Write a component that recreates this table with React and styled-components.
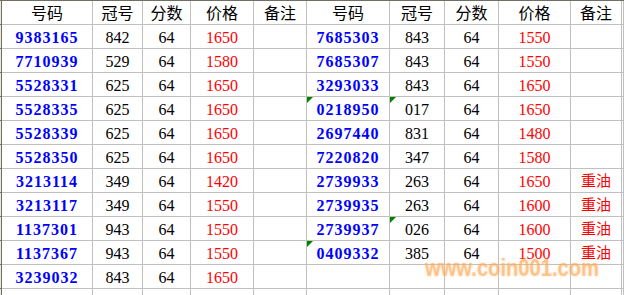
import styled, { createGlobalStyle } from "styled-components";

const COLS = [91, 50, 48, 63, 53, 83, 55, 54, 72, 51];

const GlobalStyle = createGlobalStyle`
  html, body {
    margin: 0;
    padding: 0;
    background: #ffffff;
    overflow: hidden;
  }
`;

const Page = styled.div`
  position: relative;
  width: 624px;
  height: 295px;
  overflow: hidden;
  background: #fff;
  display: flex;
  flex-direction: column;
`;

// strip left over from the column letters bar
const TopStrip = styled.div`
  display: flex;
  height: 2px;
  background: #ece9d8;
  border-bottom: 1px solid #716f64;
`;

const TopTick = styled.div`
  flex: 0 0 ${(p) => p.$w}px;
  box-sizing: border-box;
  border-right: ${(p) => (p.$tick ? "2px solid #716f64" : "none")};
`;

const Body = styled.div`
  display: flex;
  flex: 1;
`;

const LeftStrip = styled.div`
  width: 1px;
  background: #ece9d8;
  border-right: 1px solid #716f64;
  display: flex;
  flex-direction: column;
`;

const LeftTick = styled.div`
  flex: 0 0 24px;
  box-sizing: border-box;
  border-bottom: 1px solid #716f64;
`;

const Grid = styled.div`
  flex: 1;
  display: grid;
  grid-template-columns: ${COLS.map((w) => w + "px").join(" ")} 1fr;
  grid-auto-rows: 24px;
`;

const tones = { blue: "#0000ff", red: "#ff0000", black: "#000000" };

const Cell = styled.div`
  position: relative;
  box-sizing: border-box;
  border-right: 1px solid #c0c0c0;
  border-bottom: 1px solid #c0c0c0;
  text-align: center;
  white-space: nowrap;
  color: ${(p) => tones[p.$tone || "black"]};
  font-family: ${(p) =>
    p.$cjk
      ? '"Noto Sans CJK SC", sans-serif'
      : '"Liberation Serif", serif'};
  font-size: ${(p) => (p.$cjk ? p.$cjk + "px" : "16px")};
  font-weight: ${(p) => (p.$bold ? 700 : 400)};
  letter-spacing: ${(p) => (p.$bold ? "1px" : "0")};
  padding-top: ${(p) => (p.$cjk ? "1px" : "3px")};
  line-height: 20px;

  ${(p) =>
    p.$marker &&
    `
    &::before {
      content: "";
      position: absolute;
      top: 0;
      left: 0;
      border-top: 6px solid #008000;
      border-right: 6px solid transparent;
    }
  `}
`;

const Watermark = styled.div`
  position: absolute;
  left: 425px;
  top: 256px;
  font-family: "Liberation Sans", Arial, sans-serif;
  font-weight: 700;
  font-size: 24px;
  line-height: 24px;
  white-space: nowrap;
  color: rgba(248, 160, 70, 0.5);
  text-shadow: 0 0 3px rgba(255, 200, 140, 0.6);
  transform: scaleX(0.84);
  transform-origin: left top;
  pointer-events: none;
`;

const HEAD = ["号码", "冠号", "分数", "价格", "备注"];

const LEFT = [
  ["9383165", "842", "64", "1650"],
  ["7710939", "529", "64", "1580"],
  ["5528331", "625", "64", "1650"],
  ["5528335", "625", "64", "1650"],
  ["5528339", "625", "64", "1650"],
  ["5528350", "625", "64", "1650"],
  ["3213114", "349", "64", "1420"],
  ["3213117", "349", "64", "1550"],
  ["1137301", "943", "64", "1550"],
  ["1137367", "943", "64", "1550"],
  ["3239032", "843", "64", "1650"],
];

// [号码, 冠号, 分数, 价格, 备注, marker on 号码, marker on 冠号]
const RIGHT = [
  ["7685303", "843", "64", "1550", ""],
  ["7685307", "843", "64", "1550", ""],
  ["3293033", "843", "64", "1650", ""],
  ["0218950", "017", "64", "1650", "", true, true],
  ["2697440", "831", "64", "1480", ""],
  ["7220820", "347", "64", "1580", ""],
  ["2739933", "263", "64", "1650", "重油"],
  ["2739935", "263", "64", "1600", "重油"],
  ["2739937", "026", "64", "1600", "重油", false, true],
  ["0409332", "385", "64", "1500", "重油", true],
  null,
];

const Half = ({ row, codeMark, crownMark }) => {
  if (!row) {
    return (
      <>
        <Cell />
        <Cell />
        <Cell />
        <Cell />
        <Cell />
      </>
    );
  }
  return (
    <>
      <Cell $tone="blue" $bold $marker={codeMark}>
        {row[0]}
      </Cell>
      <Cell $marker={crownMark}>{row[1]}</Cell>
      <Cell>{row[2]}</Cell>
      <Cell $tone="red">{row[3]}</Cell>
      <Cell $tone="red" $cjk={15}>
        {row[4]}
      </Cell>
    </>
  );
};

const App = () => {
  return (
    <Page>
      <GlobalStyle />
      <TopStrip>
        <TopTick $w={2} />
        {COLS.map((w, i) => (
          <TopTick key={i} $w={w} $tick />
        ))}
      </TopStrip>
      <Body>
        <LeftStrip>
          {Array.from({ length: 13 }).map((_, i) => (
            <LeftTick key={i} />
          ))}
        </LeftStrip>
        <Grid>
          {[...HEAD, ...HEAD].map((h, i) => (
            <Cell key={"h" + i} $cjk={16}>
              {h}
            </Cell>
          ))}
          <Cell />
          {LEFT.map((l, i) => {
            const r = RIGHT[i];
            return (
              <div key={i} style={{ display: "contents" }}>
                <Half row={l} />
                <Half row={r} codeMark={r && r[5]} crownMark={r && r[6]} />
                <Cell />
              </div>
            );
          })}
          {Array.from({ length: 11 }).map((_, i) => (
            <Cell key={"e" + i} />
          ))}
        </Grid>
      </Body>
      <Watermark>www.coin001.com</Watermark>
    </Page>
  );
};

export default App;
